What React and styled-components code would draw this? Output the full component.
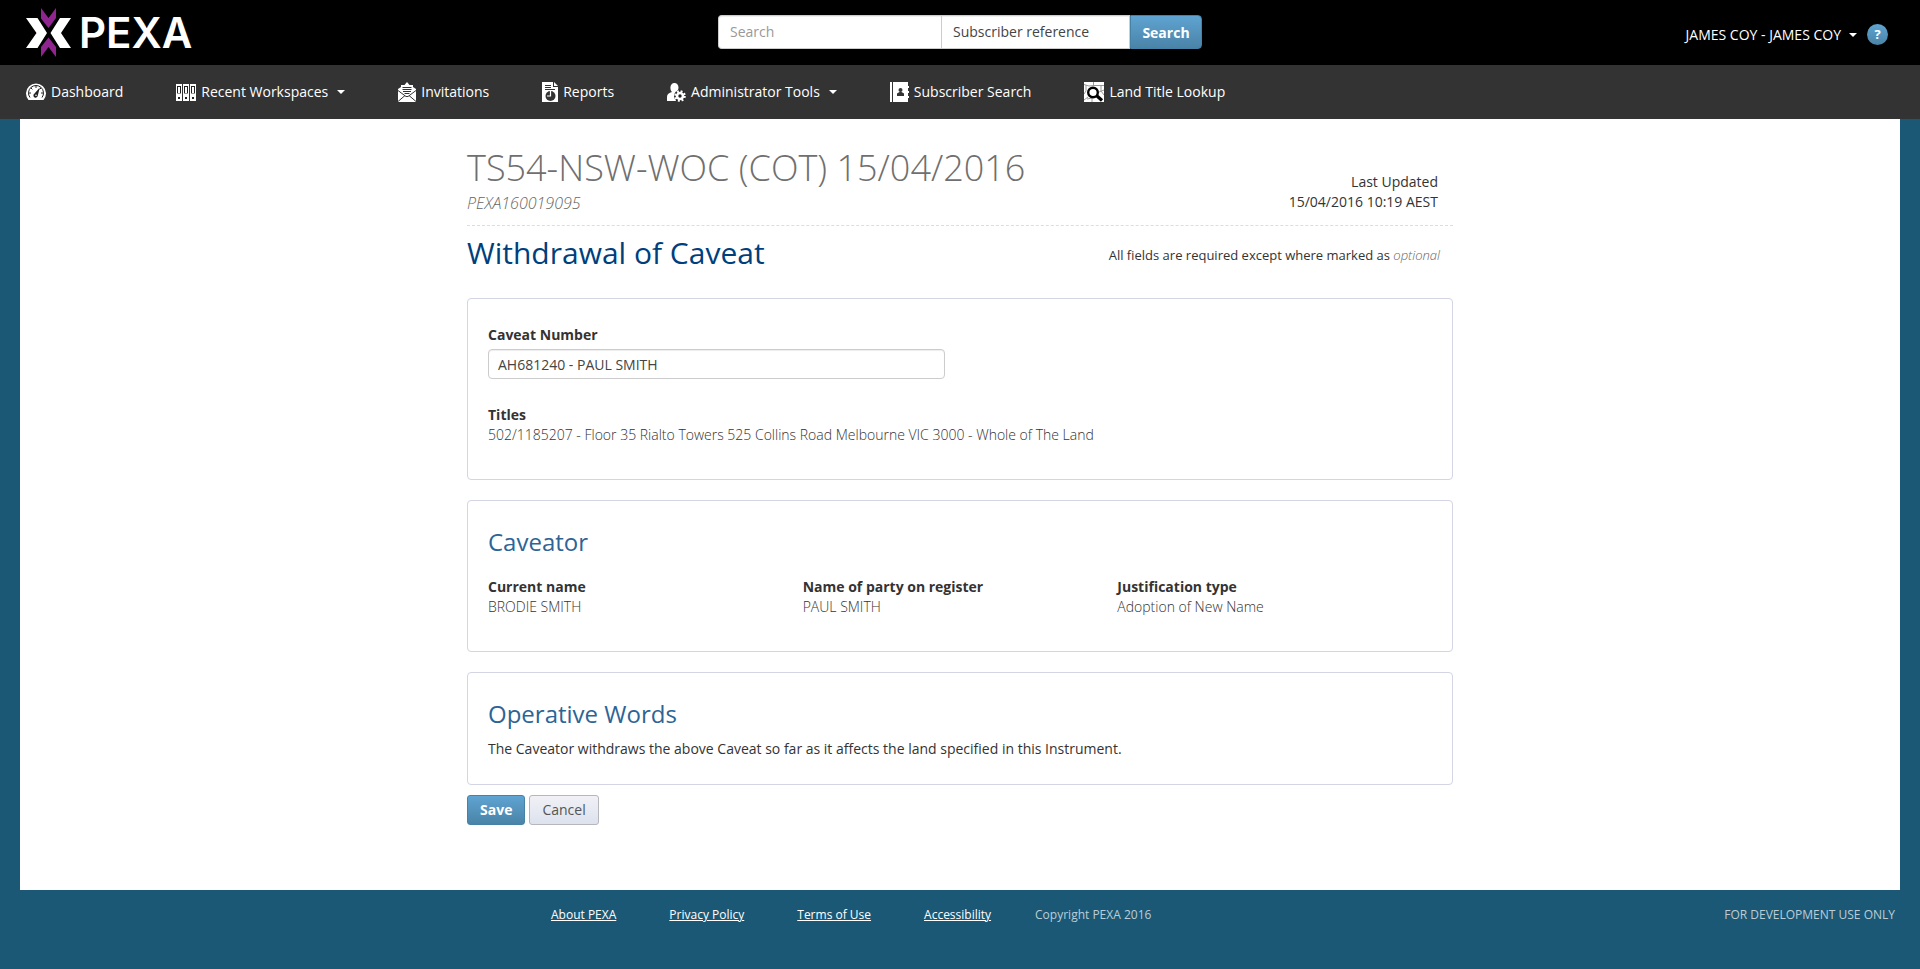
import React from "react";
import styled, { createGlobalStyle, css } from "styled-components";

const GlobalStyle = createGlobalStyle`
  *, *::before, *::after { box-sizing: border-box; }
  body {
    margin: 0;
    min-height: 100vh;
    background: #1b5875;
    color: #333;
    font-family: "Open Sans", "Noto Sans", sans-serif;
    font-size: 14px;
    line-height: 20px;
  }
  input, select, button { font-family: inherit; font-size: 14px; line-height: 20px; margin: 0; }
  h1, h2, h3, p, dl, dt, dd, ul { margin: 0; padding: 0; }
`;

/* ---------- header ---------- */

const Header = styled.header`
  display: grid;
  grid-template-columns: 1fr auto 1fr;
  height: 65px;
  background: #000;
`;

const Logo = styled.a`
  display: flex;
  align-items: center;
  gap: 7px;
  padding-left: 26px;
  color: #fff;
  text-decoration: none;
`;

const LogoName = styled.span`
  font-family: Inter, "Liberation Sans", sans-serif;
  font-size: 42px;
  font-weight: 600;
  line-height: 40px;
`;

const SearchForm = styled.form`
  display: flex;
  height: 34px;
  margin-top: 15px;
`;

const fieldBorder = css`
  border: 1px solid #ccc;
  background: #fff;
  box-shadow: inset 0 1px 1px rgba(0, 0, 0, 0.075);
  color: #444;
  &::placeholder { color: #999; opacity: 1; }
`;

const SearchInput = styled.input`
  ${fieldBorder}
  width: 223px;
  padding: 6px 11px;
  border-right: 0;
  border-radius: 4px 0 0 4px;
`;

const SearchSelect = styled.select`
  ${fieldBorder}
  appearance: none;
  width: 189px;
  padding: 5px 11px;
  border-radius: 0;
`;

const blueFill = css`
  border: 1px solid #4682a6;
  background: linear-gradient(#5fa4d2, #4a83a7);
  color: #fff;
  font-weight: 700;
`;

const SearchButton = styled.button`
  ${blueFill}
  width: 72px;
  padding: 2px 0 0;
  border-radius: 0 4px 4px 0;
`;

const Account = styled.div`
  display: flex;
  align-items: center;
  justify-content: flex-end;
  gap: 10px;
  padding: 4px 32px 0 0;
`;

const PlainButton = styled.button`
  display: flex;
  align-items: center;
  gap: 8px;
  padding: 0;
  border: 0;
  background: none;
  color: #fff;
  white-space: nowrap;
`;

const Caret = styled.span`
  border: 4px solid transparent;
  border-top-color: #fff;
  border-bottom: 0;
`;

const Help = styled.a`
  width: 21px;
  height: 21px;
  border-radius: 50%;
  background: linear-gradient(#5fa4d2, #4a83a7);
  color: #fff;
  font-size: 13px;
  font-weight: 700;
  text-align: center;
  text-decoration: none;
`;

/* ---------- navigation ---------- */

const Nav = styled.nav`
  display: flex;
  align-items: center;
  flex-wrap: wrap;
  gap: 0 53px;
  min-height: 54px;
  padding: 0 26px;
  background: #333;
`;

const NavLink = styled.a`
  display: flex;
  align-items: center;
  gap: 5px;
  color: #fff;
  text-decoration: none;
  white-space: nowrap;
  ${Caret} { margin-left: 4px; }
`;

/* ---------- page ---------- */

const Page = styled.main`
  margin: 0 20px;
  padding: 29px 20px 65px;
  background: #fff;
`;

const Content = styled.div`
  max-width: 986px;
  margin: 0 auto;
`;

const TitleRow = styled.div`
  display: flex;
  justify-content: space-between;
  align-items: flex-end;
  padding: 0 15px 12px 0;
  border-bottom: 1px dashed #ddd;
`;

const Title = styled.h1`
  color: #6f6f6f;
  font-size: 36px;
  font-weight: 300;
  line-height: 40px;
`;

const Reference = styled.p`
  margin-top: 5px;
  color: #666;
  font-size: 16px;
  font-style: italic;
  font-weight: 300;
`;

const Updated = styled.p`
  padding-bottom: 1px;
  text-align: right;
`;

const SectionRow = styled.div`
  display: flex;
  justify-content: space-between;
  align-items: center;
  padding: 7px 13px 0 0;
  margin-bottom: 25px;
`;

const SectionTitle = styled.h2`
  color: #003f7d;
  font-size: 30px;
  font-weight: 400;
  line-height: 40px;
`;

const Note = styled.p`
  padding-top: 4px;
  font-size: 13px;
  em { color: #666; font-weight: 300; }
`;

const Cards = styled.div`
  display: flex;
  flex-direction: column;
  gap: 20px;
`;

const Card = styled.section`
  padding: 26px 20px ${(p) => (p.$fields ? 34 : 25)}px;
  border: 1px solid #d3d4e4;
  border-radius: 4px;
`;

const CardTitle = styled.h3`
  margin-bottom: 10px;
  color: #2d6496;
  font-size: 24px;
  font-weight: 400;
  line-height: 30px;
`;

const FieldLabel = styled.label`
  display: block;
  margin-bottom: 4px;
  font-weight: 700;
`;

const FieldInput = styled.input`
  ${fieldBorder}
  display: block;
  width: 457px;
  max-width: 100%;
  height: 30px;
  margin-bottom: 26px;
  padding: 4px 9px;
  border-radius: 4px;
`;

const Details = styled.dl`
  display: grid;
  grid-template-columns: repeat(${(p) => p.$columns}, 1fr);
  margin-top: ${(p) => (p.$columns > 1 ? 20 : 0)}px;
  dt { font-weight: 700; }
  dd { font-weight: 300; }
`;

const Actions = styled.div`
  display: flex;
  gap: 4px;
  margin-top: 10px;
`;

const Button = styled.button`
  height: 30px;
  padding: 4px 12px;
  border: 1px solid #b5b7bd;
  border-radius: 3px;
  background: linear-gradient(#f1f1f6, #dde2ee);
  color: #555;
  ${(p) => p.$primary && blueFill}
`;

/* ---------- footer ---------- */

const Footer = styled.footer`
  display: grid;
  grid-template-columns: 1fr minmax(0, 986px) 1fr;
  padding: 15px 25px 0;
  color: #bccdd6;
  font-size: 12px;
`;

const FooterLinks = styled.ul`
  grid-column: 2;
  display: flex;
  gap: 53px;
  padding-left: 84px;
  list-style: none;
  white-space: nowrap;
  a { color: #fff; }
  li:last-child { margin-left: -9px; }
`;

const Environment = styled.p`
  text-align: right;
  white-space: nowrap;
`;

/* ---------- drawings ---------- */

const LogoMark = () => (
  <svg width="46" height="50" viewBox="0 0 46 50" aria-hidden="true">
    <path fill="#fff" d="M0 10h11.500L21 25 11.500 40H0l10.500-15zM45 10H34L24.500 25 34 40h11L35 25z" />
    <path fill="#8f258e" d="M15 0l7.500 10L30 0v10l-7.500 10L15 10.500zM15 49l7.500-10L30 49V39l-7.500-9.500L15 39z" />
  </svg>
);

const DashboardIcon = () => (
  <svg width="20" height="18" viewBox="0 0 20 18" aria-hidden="true">
    <path fill="#fff" d="M2.500 17A10 10 0 1 1 17.500 17z" />
    <path fill="none" stroke="#222" d="M4 14.500A7.500 7.500 0 1 1 16 14.500" />
    <path stroke="#222" d="M2.500 10h2.500M15 10h2.500M10 2.500V5M4.800 4.800l1.600 1.600M15.200 4.800l-1.600 1.600" />
    <path fill="#222" d="M13.800 4.500L11.800 12.500a2.200 2.200 0 1 1-3.500-1.800z" />
    <circle cx="10" cy="12.300" r=".8" fill="#fff" />
  </svg>
);

const WorkspacesIcon = () => (
  <svg width="20" height="17" viewBox="0 0 20 17" aria-hidden="true">
    {[0, 7, 14].map((x) => (
      <g key={x}>
        <path fill="#fff" d={`M${x} 0h6v17h-6z`} />
        <path fill="#222" d={`M${x + 1} 2h4v1h-4zM${x + 1} 2h1v8h-1zM${x + 4} 2h1v8h-1zM${x + 2} 13h2v2h-2z`} />
        <path fill="#999" d={`M${x + 1} 9h4v1h-4z`} />
      </g>
    ))}
  </svg>
);

const InvitationsIcon = () => (
  <svg width="18" height="20" viewBox="0 0 18 20" aria-hidden="true">
    <path fill="#fff" d="M0 7l3-2V3h3.500L9 0l2.500 3H15v2l3 2v13H0z" />
    <path stroke="#333" d="M4.500 5.500h9M4.500 7.500h9M5 9.500h8M6.500 11.500h5" />
    <path fill="none" stroke="#333" d="M0 8.500l8 6h2l8-6M0 19.500l7-6M18 19.500l-7-6" />
  </svg>
);

const ReportsIcon = () => (
  <svg width="16" height="20" viewBox="0 0 16 20" aria-hidden="true">
    <path fill="#fff" d="M0 0h11v5h5v15H0zM12 0l4 4h-4z" />
    <path stroke="#333" d="M3 3.500h6M3 5.500h6M3 7.500h10" />
    <circle cx="8.500" cy="14" r="5" fill="#333" />
    <path fill="none" stroke="#fff" strokeWidth="1.200" d="M8.500 9v5H5" />
  </svg>
);

const AdminIcon = () => (
  <svg width="19" height="19" viewBox="0 0 19 19" aria-hidden="true">
    <path fill="#fff" d="M7.500 0a4 4.500 0 0 1 4 4.500c0 2-.9 3.300-1.700 4.200L9 18H0v-4c0-3 2-4 5-5-1-.9-1.600-2.500-1.600-4.500A4 4.500 0 0 1 7.500 0z" />
    <circle cx="13" cy="13" r="6" fill="#222" />
    <circle cx="13" cy="13" r="4.800" fill="none" stroke="#fff" strokeWidth="2" strokeDasharray="2 1.770" />
    <circle cx="13" cy="13" r="3" fill="none" stroke="#fff" strokeWidth="2.600" />
  </svg>
);

const SubscriberIcon = () => (
  <svg width="19" height="20" viewBox="0 0 19 20" aria-hidden="true">
    <path fill="#fff" d="M0 0h2v20H0zM3 0h15v4h1v2h-1v3h1v2h-1v3h1v2h-1v4H3z" />
    <circle cx="10.500" cy="8" r="2" fill="#333" />
    <path fill="#333" d="M7 14v-2.500l2.500-1.500h2l2.500 1.500V14z" />
  </svg>
);

const LandIcon = () => (
  <svg width="20" height="20" viewBox="0 0 20 20" aria-hidden="true">
    <path fill="#fff" d="M0 0h20v20H0z" />
    <path fill="none" stroke="#999" d="M0 2.500l5 1.500 5-.5h10M9.500 0v4M2 3v6l-2 3M17 3.500V9l3 4M3 17l5-1v4M0 18l4-3M15 10l5-2" />
    <circle cx="9" cy="10.500" r="4.800" fill="#fff" stroke="#000" strokeWidth="2.400" />
    <path stroke="#000" strokeWidth="3.200" d="M12.500 13.500l5.500 5" />
  </svg>
);

const navItems = [
  { label: "Dashboard", Icon: DashboardIcon },
  { label: "Recent Workspaces", Icon: WorkspacesIcon, menu: true },
  { label: "Invitations", Icon: InvitationsIcon },
  { label: "Reports", Icon: ReportsIcon },
  { label: "Administrator Tools", Icon: AdminIcon, menu: true },
  { label: "Subscriber Search", Icon: SubscriberIcon },
  { label: "Land Title Lookup", Icon: LandIcon },
];

const caveator = [
  ["Current name", "BRODIE SMITH"],
  ["Name of party on register", "PAUL SMITH"],
  ["Justification type", "Adoption of New Name"],
];

const footerLinks = ["About PEXA", "Privacy Policy", "Terms of Use", "Accessibility"];

export default function App() {
  return (
    <>
      <GlobalStyle />
      <Header>
        <Logo href="#">
          <LogoMark />
          <LogoName>PEXA</LogoName>
        </Logo>
        <SearchForm role="search" onSubmit={(e) => e.preventDefault()}>
          <SearchInput type="text" placeholder="Search" aria-label="Search" />
          <SearchSelect aria-label="Search by">
            <option>Subscriber reference</option>
          </SearchSelect>
          <SearchButton type="submit">Search</SearchButton>
        </SearchForm>
        <Account>
          <PlainButton type="button">
            JAMES COY - JAMES COY
            <Caret />
          </PlainButton>
          <Help href="#" aria-label="Help">?</Help>
        </Account>
      </Header>

      <Nav>
        {navItems.map(({ label, Icon, menu }) => (
          <NavLink key={label} href="#">
            <Icon />
            {label}
            {menu && <Caret />}
          </NavLink>
        ))}
      </Nav>

      <Page>
        <Content>
          <TitleRow>
            <div>
              <Title>TS54-NSW-WOC (COT) 15/04/2016</Title>
              <Reference>PEXA160019095</Reference>
            </div>
            <Updated>
              Last Updated
              <br />
              15/04/2016 10:19 AEST
            </Updated>
          </TitleRow>
          <SectionRow>
            <SectionTitle>Withdrawal of Caveat</SectionTitle>
            <Note>
              All fields are required except where marked as <em>optional</em>
            </Note>
          </SectionRow>

          <Cards>
            <Card $fields>
              <FieldLabel htmlFor="caveat-number">Caveat Number</FieldLabel>
              <FieldInput id="caveat-number" type="text" defaultValue="AH681240 - PAUL SMITH" />
              <Details $columns={1}>
                <dt>Titles</dt>
                <dd>
                  502/1185207 - Floor 35 Rialto Towers 525 Collins Road Melbourne VIC 3000 - Whole of The Land
                </dd>
              </Details>
            </Card>
            <Card $fields>
              <CardTitle>Caveator</CardTitle>
              <Details $columns={3}>
                {caveator.map(([name, value]) => (
                  <div key={name}>
                    <dt>{name}</dt>
                    <dd>{value}</dd>
                  </div>
                ))}
              </Details>
            </Card>
            <Card>
              <CardTitle>Operative Words</CardTitle>
              <p>The Caveator withdraws the above Caveat so far as it affects the land specified in this Instrument.</p>
            </Card>
          </Cards>

          <Actions>
            <Button type="submit" $primary>Save</Button>
            <Button type="button">Cancel</Button>
          </Actions>
        </Content>
      </Page>

      <Footer>
        <FooterLinks>
          {footerLinks.map((label) => (
            <li key={label}>
              <a href="#">{label}</a>
            </li>
          ))}
          <li>Copyright PEXA 2016</li>
        </FooterLinks>
        <Environment>FOR DEVELOPMENT USE ONLY</Environment>
      </Footer>
    </>
  );
}
